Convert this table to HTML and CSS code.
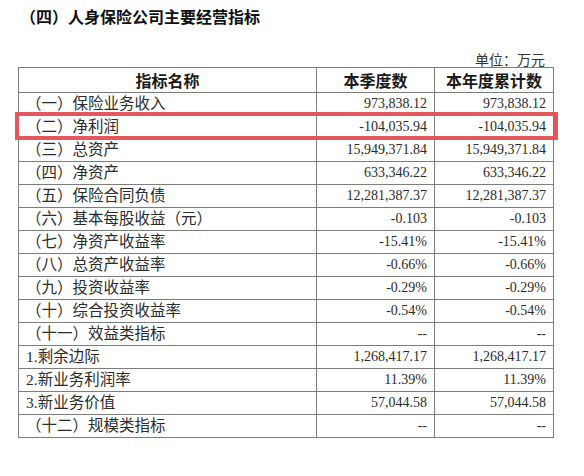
FILE: index.html
```html
<!DOCTYPE html>
<html lang="zh-CN">
<head>
  <meta charset="UTF-8">
  <meta name="viewport" content="width=device-width, initial-scale=1.0">
  <title>人身保险公司主要经营指标</title>
  <link rel="stylesheet" href="styles.css">
</head>
<body>

  <div class="page">
    <h3 class="title">（四）人身保险公司主要经营指标</h3>
    <p class="unit">单位：万元</p>

    <div class="table-wrap">
      <table class="report">
        <colgroup>
          <col class="col-name">
          <col class="col-num">
          <col class="col-num2">
        </colgroup>
        <thead>
          <tr>
            <th>指标名称</th>
            <th>本季度数</th>
            <th>本年度累计数</th>
          </tr>
        </thead>
        <tbody>
          <tr><td class="name">（一）保险业务收入</td><td>973,838.12</td><td>973,838.12</td></tr>
          <tr><td class="name">（二）净利润</td><td>-104,035.94</td><td>-104,035.94</td></tr>
          <tr><td class="name">（三）总资产</td><td>15,949,371.84</td><td>15,949,371.84</td></tr>
          <tr><td class="name">（四）净资产</td><td>633,346.22</td><td>633,346.22</td></tr>
          <tr><td class="name">（五）保险合同负债</td><td>12,281,387.37</td><td>12,281,387.37</td></tr>
          <tr><td class="name">（六）基本每股收益（元）</td><td>-0.103</td><td>-0.103</td></tr>
          <tr><td class="name">（七）净资产收益率</td><td>-15.41%</td><td>-15.41%</td></tr>
          <tr><td class="name">（八）总资产收益率</td><td>-0.66%</td><td>-0.66%</td></tr>
          <tr><td class="name">（九）投资收益率</td><td>-0.29%</td><td>-0.29%</td></tr>
          <tr><td class="name">（十）综合投资收益率</td><td>-0.54%</td><td>-0.54%</td></tr>
          <tr><td class="name">（十一）效益类指标</td><td>--</td><td>--</td></tr>
          <tr><td class="name">1.剩余边际</td><td>1,268,417.17</td><td>1,268,417.17</td></tr>
          <tr><td class="name">2.新业务利润率</td><td>11.39%</td><td>11.39%</td></tr>
          <tr><td class="name">3.新业务价值</td><td>57,044.58</td><td>57,044.58</td></tr>
          <tr><td class="name">（十二）规模类指标</td><td>--</td><td>--</td></tr>
        </tbody>
      </table>
      <!-- highlight around the net profit row -->
      <div class="mark"></div>
    </div>
  </div>

</body>
</html>
```

FILE: styles.css
```css
* {
  margin: 0;
  padding: 0;
  box-sizing: border-box;
}

body {
  background: #fff;
  font-family: "Liberation Serif", "Noto Sans CJK SC", serif;
  color: #2b2b2b;
}

.page {
  width: 553px;
  padding: 6px 0 0 18px;
}

.title {
  margin-left: 2px;
  font-family: "Noto Sans CJK SC", sans-serif;
  font-size: 16px;
  line-height: 20px;
  font-weight: 700;
  color: #111;
}

.unit {
  margin-top: 25px;
  padding-right: 8px;
  text-align: right;
  font-family: "Noto Sans CJK SC", sans-serif;
  font-size: 14px;
  line-height: 16px;
  color: #333;
}

.table-wrap {
  position: relative;
}

.report {
  width: 535px;
  table-layout: fixed;
  border-collapse: collapse;
}

.col-name { width: 298px; }
.col-num { width: 118px; }
.col-num2 { width: 119px; }

.report th,
.report td {
  border: 1px solid #7d7d7d;
  padding: 0 7px;
  white-space: nowrap;
}

.report th {
  height: 23px;
  text-align: center;
  font-family: "Noto Sans CJK SC", sans-serif;
  font-size: 16px;
  font-weight: 700;
  color: #1a1a1a;
}

.report td {
  height: 22.13px;
  text-align: right;
  font-size: 14px;
  line-height: 22px;
}

.report td.name {
  text-align: left;
  font-size: 15.5px;
}

.mark {
  position: absolute;
  left: -3px;
  top: 45px;
  width: 543px;
  height: 28px;
  border: 4px solid #e2585c;
}
```
